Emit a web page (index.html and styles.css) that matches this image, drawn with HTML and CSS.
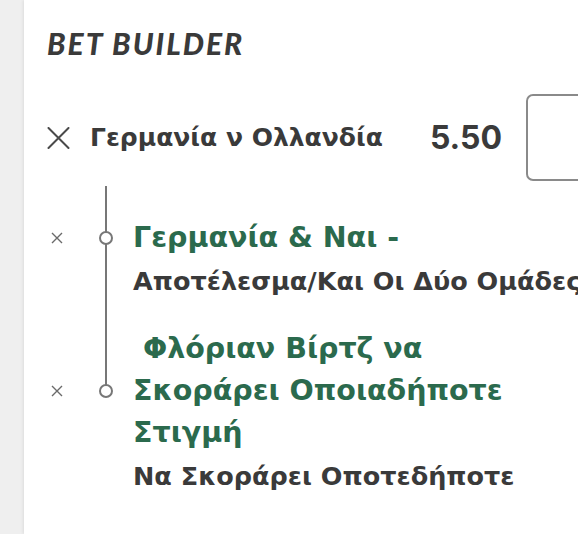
FILE: index.html
```html
<!DOCTYPE html>
<html lang="el">
<head>
<meta charset="utf-8">
<title>Bet Builder</title>
<link rel="stylesheet" href="styles.css">
</head>
<body>
<div class="page">
  <aside class="strip"></aside>
  <main class="panel">
    <h1 class="title">BET BUILDER</h1>
    <div class="match-row">
      <button class="remove-big" aria-label="Αφαίρεση">
        <svg width="23" height="22" viewBox="0 0 23 22"><path d="M1.5 1 L21.5 21 M21.5 1 L1.5 21" stroke="#4a4a4a" stroke-width="2" fill="none" stroke-linecap="round"/></svg>
      </button>
      <span class="match-name">Γερμανία ν Ολλανδία</span>
      <span class="odds">5.50</span>
      <div class="stake"></div>
    </div>
    <div class="legs">
      <div class="leg">
        <span class="remove-small"><svg width="12" height="12" viewBox="0 0 12 12"><path d="M1 1 L11 11 M11 1 L1 11" stroke="#6a6a6a" stroke-width="1.4" fill="none"/></svg></span>
        <span class="rail"></span>
        <span class="node"></span>
        <div class="leg-title">Γερμανία &amp; Ναι -</div>
        <div class="leg-market">Αποτέλεσμα/Και Οι Δύο Ομάδες</div>
      </div>
      <div class="leg last">
        <span class="remove-small"><svg width="12" height="12" viewBox="0 0 12 12"><path d="M1 1 L11 11 M11 1 L1 11" stroke="#6a6a6a" stroke-width="1.4" fill="none"/></svg></span>
        <span class="rail"></span>
        <span class="node"></span>
        <div class="leg-title">&nbsp;Φλόριαν Βίρτζ να Σκοράρει Οποιαδήποτε Στιγμή</div>
        <div class="leg-market">Να Σκοράρει Οποτεδήποτε</div>
      </div>
    </div>
  </main>
</div>
</body>
</html>
```
FILE: styles.css
```css
html, body {
  margin: 0;
  padding: 0;
  width: 578px;
  height: 534px;
  overflow: hidden;
  background: #efefef;
}
.page {
  display: flex;
  height: 534px;
  font-family: "DejaVu Sans", "Noto Sans", sans-serif;
}
.strip {
  width: 24px;
  flex-shrink: 0;
  background: #efefef;
}
.panel {
  flex: 1;
  min-width: 0;
  background: #ffffff;
  box-shadow: -1px 0 3px rgba(0,0,0,0.08);
  padding: 25px 0 0 23px;
  overflow: hidden;
}
.title {
  margin: 0;
  font-family: Lato, "Noto Sans", sans-serif;
  font-style: italic;
  font-weight: 900;
  font-size: 30px;
  line-height: 36px;
  color: #3a3a3a;
  letter-spacing: 2px;
}
.match-row {
  margin-top: 33px;
  display: flex;
  align-items: center;
  height: 87px;
  white-space: nowrap;
}
.remove-big {
  border: 0;
  background: none;
  padding: 0;
  width: 23px;
  height: 22px;
  display: flex;
  margin-right: 20px;
  flex-shrink: 0;
}
.match-name {
  font-size: 25px;
  font-weight: 700;
  color: #3a3a3a;
}
.odds {
  margin-left: 47px;
  font-family: Inter, "DejaVu Sans", sans-serif;
  font-size: 32px;
  font-weight: 700;
  color: #3a3a3a;
}
.stake {
  margin-left: 24px;
  flex-shrink: 0;
  width: 100px;
  height: 83px;
  border: 2px solid #8a8a8a;
  border-radius: 7px;
}
.legs {
  margin-top: 5px;
}
.leg {
  display: grid;
  grid-template-columns: 49px 20px 1fr;
  grid-template-rows: auto auto;
  padding-top: 31px;
}
.remove-small {
  grid-column: 1;
  grid-row: 1;
  align-self: center;
  width: 20px;
  display: flex;
  justify-content: center;
}
.remove-small svg {
  display: block;
}
.rail {
  grid-column: 2;
  grid-row: 1 / 3;
  margin-top: -31px;
  background: linear-gradient(#777777, #777777) 9px 0 / 2px 100% no-repeat;
}
.leg.last .rail {
  grid-row: 1;
  background: linear-gradient(#777777, #777777) 9px 0 / 2px calc(50% + 15px) no-repeat;
}
.node {
  grid-column: 2;
  grid-row: 1;
  align-self: center;
  justify-self: center;
  width: 10px;
  height: 10px;
  border: 2px solid #777777;
  border-radius: 50%;
  background: #fff;
}
.leg-title {
  grid-column: 3;
  grid-row: 1;
  padding-left: 17px;
  padding-right: 30px;
  font-size: 28.5px;
  line-height: 42px;
  font-weight: 700;
  color: #2b6a4d;
}
.leg-market {
  grid-column: 3;
  grid-row: 2;
  padding-left: 17px;
  margin-top: 6px;
  font-size: 25.5px;
  line-height: 32px;
  font-weight: 700;
  color: #3a3a3a;
  white-space: nowrap;
}
```
